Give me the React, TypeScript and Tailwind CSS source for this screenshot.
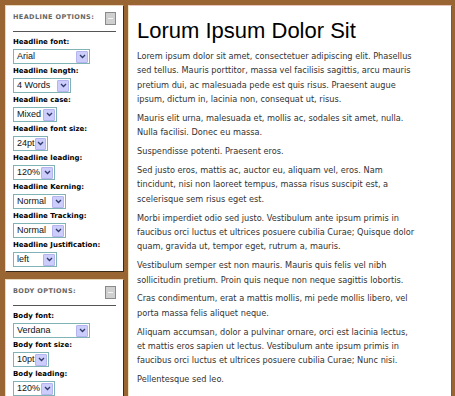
import React from "react";

type Opt = { label: string; value: string; width: number };

const headlineOpts: Opt[] = [
  { label: "Headline font:", value: "Arial", width: 77 },
  { label: "Headline length:", value: "4 Words", width: 58 },
  { label: "Headline case:", value: "Mixed", width: 44 },
  { label: "Headline font size:", value: "24pt", width: 35 },
  { label: "Headline leading:", value: "120%", width: 42 },
  { label: "Headline Kerning:", value: "Normal", width: 53 },
  { label: "Headline Tracking:", value: "Normal", width: 53 },
  { label: "Headline Justification:", value: "left", width: 44 },
];

const bodyOpts: Opt[] = [
  { label: "Body font:", value: "Verdana", width: 77 },
  { label: "Body font size:", value: "10pt", width: 36 },
  { label: "Body leading:", value: "120%", width: 42 },
];

const paragraphs: string[][] = [
  [
    "Lorem ipsum dolor sit amet, consectetuer adipiscing elit. Phasellus",
    "sed tellus. Mauris porttitor, massa vel facilisis sagittis, arcu mauris",
    "pretium dui, ac malesuada pede est quis risus. Praesent augue",
    "ipsum, dictum in, lacinia non, consequat ut, risus.",
  ],
  [
    "Mauris elit urna, malesuada et, mollis ac, sodales sit amet, nulla.",
    "Nulla facilisi. Donec eu massa.",
  ],
  ["Suspendisse potenti. Praesent eros."],
  [
    "Sed justo eros, mattis ac, auctor eu, aliquam vel, eros. Nam",
    "tincidunt, nisi non laoreet tempus, massa risus suscipit est, a",
    "scelerisque sem risus eget est.",
  ],
  [
    "Morbi imperdiet odio sed justo. Vestibulum ante ipsum primis in",
    "faucibus orci luctus et ultrices posuere cubilia Curae; Quisque dolor",
    "quam, gravida ut, tempor eget, rutrum a, mauris.",
  ],
  [
    "Vestibulum semper est non mauris. Mauris quis felis vel nibh",
    "sollicitudin pretium. Proin quis neque non neque sagittis lobortis.",
  ],
  [
    "Cras condimentum, erat a mattis mollis, mi pede mollis libero, vel",
    "porta massa felis aliquet neque.",
  ],
  [
    "Aliquam accumsan, dolor a pulvinar ornare, orci est lacinia lectus,",
    "et mattis eros sapien ut lectus. Vestibulum ante ipsum primis in",
    "faucibus orci luctus et ultrices posuere cubilia Curae; Nunc nisi.",
  ],
  ["Pellentesque sed leo."],
];

function FakeSelect({ value, width }: { value: string; width: number }) {
  return (
    <div
      className="flex h-[15px] items-center border border-[#7fb3b6] bg-white"
      style={{ width }}
    >
      <span className="flex-1 pl-[3px] font-['Liberation_Sans',Arial,sans-serif] text-[9px] leading-[13px] text-[#111]">
        {value}
      </span>
      <span className="mr-px flex h-[12px] w-[12px] items-center justify-center rounded-[1px] border border-[#b4b4ee] bg-[#cdcdfb]">
        <svg width="7" height="5" viewBox="0 0 7 5">
          <path d="M1 1 L3.5 3.5 L6 1" fill="none" stroke="#2d3b66" strokeWidth="1.3" />
        </svg>
      </span>
    </div>
  );
}

function Panel({ title, opts }: { title: string; opts: Opt[] }) {
  return (
    <div className="border-t border-l border-r border-b border-t-[#e8d8bb] border-l-[#e8d8bb] border-r-[#3a2a1a] border-b-[#3a2a1a] bg-white px-[7px] pt-[5px] pb-[4px]">
      <div className="flex h-[14px] items-center justify-between">
        <span className="font-['DejaVu_Sans',Verdana,sans-serif] text-[6.5px] font-bold tracking-[0.4px] text-[#666]">
          {title}
        </span>
        <span className="flex h-[13px] w-[11px] items-center justify-center border border-[#8a8a8a] bg-[#cfcfcf]">
          <span className="h-px w-[5px] bg-[#f4f4f4]" />
        </span>
      </div>
      <div className="mt-[6px] h-px bg-[#555]" />
      <div className="mt-[4px] flex flex-col gap-[1px]">
        {opts.map((o) => (
          <div key={o.label}>
            <div className="h-[13px] font-['DejaVu_Sans',Verdana,sans-serif] text-[7px] font-bold leading-[13px] text-black">
              {o.label}
            </div>
            <FakeSelect value={o.value} width={o.width} />
          </div>
        ))}
      </div>
    </div>
  );
}

export default function App() {
  return (
    <div className="flex h-[396px] items-start gap-[4px] overflow-hidden bg-[#996633] pt-[5px] pl-[5px] pr-[3px]">
      <div className="flex w-[119px] shrink-0 flex-col gap-[7px]">
        <Panel title="HEADLINE OPTIONS:" opts={headlineOpts} />
        <Panel title="BODY OPTIONS:" opts={bodyOpts} />
      </div>

      <div className="min-h-[400px] flex-1 border-t border-l border-r border-t-[#e8c4bc] border-l-[#f1e3c2] border-r-[#7a5a3a] bg-white px-[8px] pt-[12px]">
        <h1 className="font-['Liberation_Sans',Arial,sans-serif] text-[22px] leading-[26px] text-black">
          Lorum Ipsum Dolor Sit
        </h1>
        <div className="mt-[5px] font-['DejaVu_Sans',Verdana,sans-serif] text-[8.2px] leading-[14.4px] text-[#333]">
          {paragraphs.map((lines, i) => (
            <p key={i} className="mb-[4.4px] whitespace-nowrap">
              {lines.map((l, j) => (
                <React.Fragment key={j}>
                  {l}
                  {j < lines.length - 1 && <br />}
                </React.Fragment>
              ))}
            </p>
          ))}
        </div>
      </div>
    </div>
  );
}
